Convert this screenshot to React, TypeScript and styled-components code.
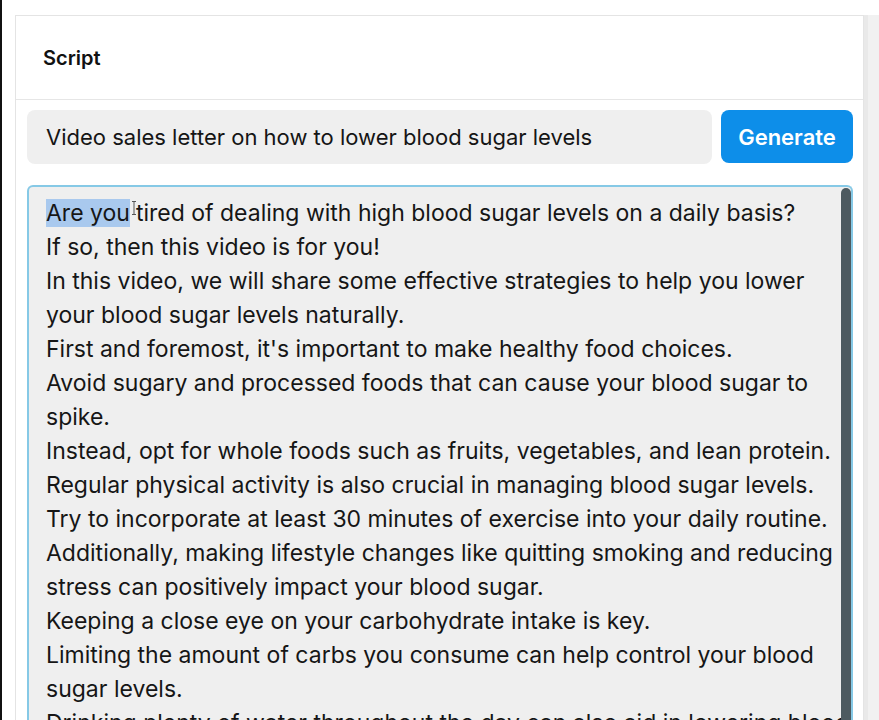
import React from 'react';
import styled, { createGlobalStyle } from 'styled-components';

const GlobalStyle = createGlobalStyle`
  html, body {
    margin: 0;
    padding: 0;
    background: #fff;
    overflow: hidden;
  }

  body {
    font-family: Inter, "Noto Sans", sans-serif;
    color: #111;
  }
`;

const Page = styled.div`
  width: 879px;
  height: 720px;
  display: flex;
  align-items: flex-start;
  overflow: hidden;
  box-sizing: border-box;
  border-left: 2px solid #111;
  background: #fff;
`;

const Gutter = styled.div`
  width: 13px;
  flex-shrink: 0;
`;

const Card = styled.div`
  width: 849px;
  margin-top: 15px;
  flex-shrink: 0;
  box-sizing: border-box;
  border: 1px solid #e4e4e4;
  border-bottom: none;
  background: #fff;
  display: flex;
  flex-direction: column;
`;

const PageScrollTrack = styled.div`
  flex: 1;
  align-self: stretch;
  margin-top: 15px;
  background: linear-gradient(90deg, #e9e9e9 0, #e9e9e9 4px, #f1f1f1 4px, #f1f1f1 100%);
`;

const CardHeader = styled.div`
  height: 84px;
  flex-shrink: 0;
  padding: 0 27px;
  display: flex;
  align-items: center;
  border-bottom: 1px solid #e6e6e6;
  box-sizing: border-box;
`;

const Title = styled.h2`
  margin: 0;
  font-size: 20px;
  font-weight: 600;
  color: #111;
`;

const Body = styled.div`
  padding: 10px 10px 0 11px;
  display: flex;
  flex-direction: column;
  gap: 21px;
`;

const PromptRow = styled.div`
  display: flex;
  gap: 9px;
`;

const PromptInput = styled.div`
  flex: 1;
  height: 54px;
  padding: 0 19px;
  display: flex;
  align-items: center;
  border-radius: 8px;
  background: #efefef;
  font-size: 22px;
  color: #151515;
`;

const GenerateButton = styled.button`
  width: 132px;
  height: 53px;
  border: none;
  border-radius: 8px;
  background: #0d8ee9;
  color: #fff;
  font-family: Inter, "Noto Sans", sans-serif;
  font-size: 22px;
  font-weight: 600;
  cursor: pointer;
`;

const ScriptBox = styled.div`
  position: relative;
  height: 560px;
  padding: 9px 14px 0 17px;
  box-sizing: border-box;
  border: 2px solid #86c9e6;
  border-bottom: none;
  border-radius: 6px 6px 0 0;
  background: #efefef;
  overflow: hidden;
`;

const ScrollThumb = styled.div`
  position: absolute;
  top: 1px;
  right: 0;
  width: 10px;
  height: 100%;
  border-radius: 5px 5px 0 0;
  background: #4d5a60;
`;

const Paragraph = styled.p`
  margin: 0;
  font-size: 23px;
  line-height: 34px;
  white-space: nowrap;
  color: #161616;
`;

const Selected = styled.span`
  background: #a9c9ee;
`;

const Caret = styled.svg`
  display: inline-block;
  width: 6px;
  height: 14px;
  margin: 0 -1px 0 1px;
  vertical-align: 6px;
`;

// each paragraph is split where the reference wraps it
const paragraphs: string[][] = [
  ['If so, then this video is for you!'],
  ['In this video, we will share some effective strategies to help you lower', 'your blood sugar levels naturally.'],
  ["First and foremost, it's important to make healthy food choices."],
  ['Avoid sugary and processed foods that can cause your blood sugar to', 'spike.'],
  ['Instead, opt for whole foods such as fruits, vegetables, and lean protein.'],
  ['Regular physical activity is also crucial in managing blood sugar levels.'],
  ['Try to incorporate at least 30 minutes of exercise into your daily routine.'],
  ['Additionally, making lifestyle changes like quitting smoking and reducing', 'stress can positively impact your blood sugar.'],
  ['Keeping a close eye on your carbohydrate intake is key.'],
  ['Limiting the amount of carbs you consume can help control your blood', 'sugar levels.'],
  ['Drinking plenty of water throughout the day can also aid in lowering blood', 'sugar levels.'],
];

function App() {
  return (
    <>
      <GlobalStyle />
      <Page>
        <Gutter />
        <Card>
          <CardHeader>
            <Title>Script</Title>
          </CardHeader>

          <Body>
            <PromptRow>
              <PromptInput>Video sales letter on how to lower blood sugar levels</PromptInput>
              <GenerateButton>Generate</GenerateButton>
            </PromptRow>

            <ScriptBox>
              <Paragraph>
                <Selected>Are you</Selected>
                <Caret viewBox="0 0 6 14">
                  <path d="M1 0.5h4M3 0.5v13M1 13.5h4" stroke="#555" strokeWidth="1" fill="none" />
                </Caret>
                tired of dealing with high blood sugar levels on a daily basis?
              </Paragraph>
              {paragraphs.map((rows) => (
                <Paragraph key={rows[0]}>
                  {rows.map((row, i) => (
                    <React.Fragment key={row}>
                      {i > 0 && <br />}
                      {row}
                    </React.Fragment>
                  ))}
                </Paragraph>
              ))}
              <ScrollThumb />
            </ScriptBox>
          </Body>
        </Card>
        <PageScrollTrack />
      </Page>
    </>
  );
}

export default App;
